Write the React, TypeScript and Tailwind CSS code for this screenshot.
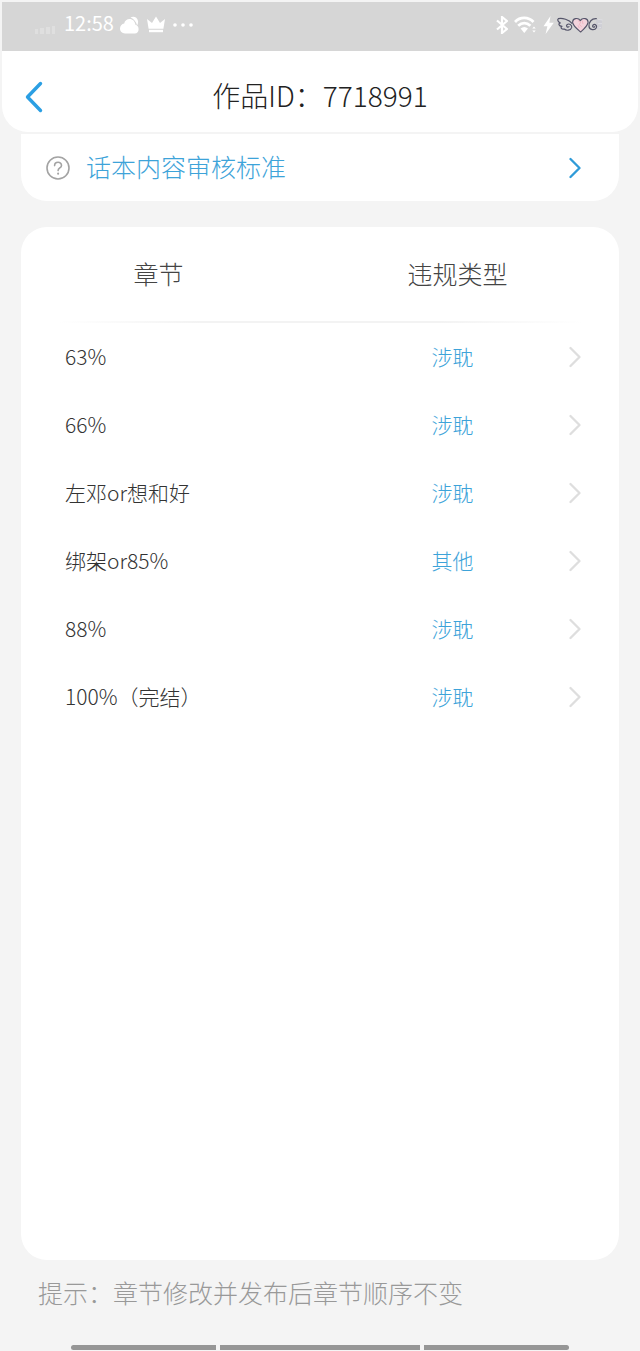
interface Chapter {
  name: string;
  type: string;
}

const chapters: Chapter[] = [
  { name: '63%', type: '涉耽' },
  { name: '66%', type: '涉耽' },
  { name: '左邓or想和好', type: '涉耽' },
  { name: '绑架or85%', type: '其他' },
  { name: '88%', type: '涉耽' },
  { name: '100%（完结）', type: '涉耽' },
];

function Chevron({ className }: { className: string }) {
  return (
    <svg
      className={className}
      width="12"
      height="22"
      viewBox="0 0 12 22"
      fill="none"
      stroke="currentColor"
      strokeLinecap="round"
      strokeLinejoin="round"
      aria-hidden="true"
    >
      <path d="M1.5 2 L10.5 11 L1.5 20" strokeWidth="2.3" />
    </svg>
  );
}

// Herz mit Flügeln, liegt über der Akkuanzeige
function WingedHeart() {
  return (
    <svg width="48" height="19" viewBox="18 21 144 57" fill="none" aria-hidden="true">
      <rect x="138" y="34" width="18" height="30" rx="5" fill="#cfcfd5" />
      <g stroke="#55556a" strokeWidth="3.6" strokeLinecap="round" strokeLinejoin="round">
        <path d="M66 46 C58 36 36 28 25 32 C21 35 24 42 31 45 C24 46 26 54 36 55 C30 58 35 65 43 63 C49 69 62 68 65 59 C67 51 57 45 51 50 C47 55 53 60 57 56" />
        <path
          d="M92 72 C84 65 70 55 68 44 C67 31 84 27 91 38 C98 27 115 31 114 44 C112 55 100 65 92 72 Z"
          fill="#f3d3dc"
        />
        <path d="M139 32 C125 31 116 42 117 55 C118 66 134 69 139 59 C142 50 131 46 128 53 C127 58 132 59 134 56" />
      </g>
      <path d="M84 38 L92 42 L88 50 L95 56 M97 38 L99 48 M84 52 L88 60" stroke="#efb6c4" strokeWidth="3" />
      <path d="M144 34 L158 36 M144 47 L156 47 M145 60 L153 58" stroke="#dedee3" strokeWidth="3" />
    </svg>
  );
}

function StatusBar() {
  return (
    <div className="mx-[2px] mt-[2px] h-[49px] bg-[#d6d6d6] flex items-center justify-between pb-1 pl-[33px] pr-[34px] text-white">
      <div className="flex items-center">
        <svg width="21" height="9" viewBox="0 0 21 9" className="mt-3" fill="#dfdfdf" aria-hidden="true">
          <rect x="0" y="3" width="3" height="5" />
          <rect x="5" y="2" width="4" height="6" />
          <rect x="11" y="1" width="4" height="7" />
          <rect x="17" y="0" width="3" height="8" />
        </svg>
        <span className="ml-2 w-[52px] pb-1 text-[20px] leading-6 font-normal">12:58</span>
        <svg width="20" height="18" viewBox="0 0 20 18" className="ml-1" fill="currentColor" aria-hidden="true">
          <path d="M10.5 1.5 C13 -0.3 17.5 0.8 18 5 C18.2 7 17.8 8.4 17 9.3 C16.2 5.8 14 3 10.5 1.5 Z" />
          <path d="M5 17.5 C2 17.5 0 15.4 0 12.6 C0 9.8 1.8 7.9 4.2 7.5 C4.8 4.6 7 3 9.6 3 C12.8 3 15 5.4 15.4 8.8 C17.4 9.2 18.6 11 18.6 13.2 C18.6 15.8 17.2 17.5 14.8 17.5 Z" />
        </svg>
        <svg width="18" height="17" viewBox="0 0 18 17" className="ml-[7px]" fill="currentColor" aria-hidden="true">
          <path d="M0 3 L5 7 L9 0.5 L13 7 L18 3 L16.4 12.8 H1.6 Z" />
          <rect x="2" y="13.8" width="14" height="2.4" />
        </svg>
        <svg width="20" height="4" viewBox="0 0 20 4" className="ml-2" fill="currentColor" aria-hidden="true">
          <circle cx="2" cy="2" r="1.8" />
          <circle cx="10" cy="2" r="1.8" />
          <circle cx="18" cy="2" r="1.8" />
        </svg>
      </div>
      <div className="flex items-center">
        <svg width="12" height="18" viewBox="0 0 12 18" fill="none" stroke="currentColor" strokeWidth="2.2" aria-hidden="true">
          <path d="M1 4.5 L11 13 L6 17 V1 L11 5 L1 13.5" />
        </svg>
        <svg width="23" height="18" viewBox="0 0 23 18" className="ml-[6px]" fill="none" stroke="currentColor" aria-hidden="true">
          <path d="M1 6 C6 0.6 14.5 0.6 19.5 6" strokeWidth="2.8" />
          <path d="M4.2 9.8 C8 6.2 12.6 6.2 16.4 9.8" strokeWidth="2.8" />
          <path d="M6.6 12.6 C9 10.6 11.6 10.6 14 12.6 L10.3 17 Z" fill="currentColor" stroke="none" />
          <path d="M18.3 12.4 L20 10.4 L21.7 12.4 Z M18.3 14.6 L20 16.6 L21.7 14.6 Z" fill="currentColor" stroke="none" />
        </svg>
        <svg width="11" height="18" viewBox="0 0 11 18" className="ml-[6px]" fill="currentColor" aria-hidden="true">
          <path d="M7.5 0 L0.5 10.2 H4.4 L2.6 18 L10.8 6.8 H6.4 Z" />
        </svg>
        <span className="ml-[2px]">
          <WingedHeart />
        </span>
      </div>
    </div>
  );
}

export default function App() {
  return (
    <div className="min-h-screen bg-[#f4f4f4] flex flex-col font-light font-['Noto_Sans_CJK_SC',sans-serif]">
      <StatusBar />

      <header className="mx-[2px] h-[81px] shrink-0 bg-white rounded-b-[26px] grid grid-cols-[64px_1fr_64px] items-center pt-[10px]">
        <button type="button" aria-label="返回" className="h-full flex items-center pl-[23px] text-[#2b9fe3]">
          <svg width="18" height="32" viewBox="0 0 18 32" fill="none" stroke="currentColor" strokeWidth="3.4" strokeLinecap="round" strokeLinejoin="round" aria-hidden="true">
            <path d="M15.5 2.5 L2.5 16 L15.5 29.5" />
          </svg>
        </button>
        <h1 className="pb-1 text-center text-[28px] leading-10 text-[#222222]">作品ID：7718991</h1>
      </header>

      <a
        href="#standard"
        className="mx-[21px] mt-[2px] h-[67px] shrink-0 bg-white rounded-b-[26px] flex items-center pl-[25px] pr-[38px] text-[#3da3d9]"
      >
        <svg width="24" height="24" viewBox="0 0 24 24" fill="none" stroke="#a3a3a3" strokeWidth="1.6" strokeLinecap="round" aria-hidden="true">
          <circle cx="12" cy="12" r="11" />
          <path d="M8.6 9.6 C8.6 5 15.6 5.2 15.5 9.4 C15.4 12 12.1 12 12.1 14.6" />
          <path d="M12.1 17.6 V17.8" strokeWidth="2" />
        </svg>
        <span className="ml-4 flex-1 pb-1 text-[25px] leading-8">话本内容审核标准</span>
        <Chevron className="text-[#2f9bd8]" />
      </a>

      <main className="mx-[21px] mt-[26px] flex-1 bg-white rounded-[26px]">
        <table className="w-full table-fixed">
          <colgroup>
            <col className="w-[46%]" />
            <col />
            <col className="w-[74px]" />
          </colgroup>
          <thead>
            <tr className="h-24 text-[25px] leading-8 text-[#444444] bg-[linear-gradient(to_right,transparent_6%,#f3f3f3_30%,#f3f3f3_70%,transparent_94%)] bg-[length:100%_2px] bg-bottom bg-no-repeat">
              <th scope="col" className="pb-1 font-light">章节</th>
              <th scope="col" colSpan={2} className="pb-1 font-light">违规类型</th>
            </tr>
          </thead>
          <tbody className="text-[21px] leading-8">
            {chapters.map((chapter) => (
              <tr key={chapter.name} className="h-[68px]">
                <td className="pb-[2px] pl-11 text-[#333333]">{chapter.name}</td>
                <td className="pb-[2px] pl-16 text-center text-[#3da3d9]">{chapter.type}</td>
                <td className="pl-6">
                  <button type="button" aria-label={chapter.name} className="block">
                    <Chevron className="text-[#dedede]" />
                  </button>
                </td>
              </tr>
            ))}
          </tbody>
        </table>
      </main>

      <footer className="shrink-0">
        <p className="mt-4 pl-[38px] text-[25px] leading-8 text-[#999999]">提示：章节修改并发布后章节顺序不变</p>
        <div className="mx-[71px] mt-[37px] mb-px h-[5px] grid grid-cols-[145fr_200fr_145fr] gap-1">
          <span className="bg-[#969696] rounded-l-full" />
          <span className="bg-[#969696]" />
          <span className="bg-[#969696] rounded-r-full" />
        </div>
      </footer>
    </div>
  );
}
